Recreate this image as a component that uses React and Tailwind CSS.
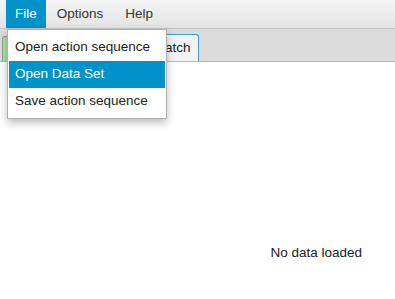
export default function App() {
  return (
    <div className="relative w-[395px] h-[299px] bg-white overflow-hidden text-[#333333]" style={{ fontFamily: '"Liberation Sans", Arial, sans-serif' }}>
      {/* menu bar */}
      <div className="flex h-[29px] items-stretch bg-gradient-to-b from-[#f4f4f4] to-[#e4e4e4] border-b border-[#c4c4c4] text-[13.5px] pl-[6px]">
        <div className="flex items-center px-[9px] bg-[#0093c9] text-white">File</div>
        <div className="flex items-center px-[11px]">Options</div>
        <div className="flex items-center px-[11px]">Help</div>
      </div>

      {/* tab header */}
      <div className="flex items-end h-[33px] bg-[#dcdcdc] border-b border-[#b8b8b8] pl-[2px]">
        <div className="h-[25px] w-[132px] bg-[#a8e3a0] border border-[#9c9c9c] border-b-0 rounded-t-[3px]"></div>
        <div className="flex items-center h-[27px] ml-[1px] pl-[20px] pr-[7px] bg-[#f3f3f3] border border-[#39a0d6] border-b-0 rounded-t-[3px] text-[13.5px] text-[#222]">
          Batch
        </div>
      </div>

      {/* content */}
      <div className="flex justify-end pt-[181px] pr-[33px] text-[13.5px] text-[#222]">
        No data loaded
      </div>

      {/* dropdown menu */}
      <div className="absolute left-[7px] top-[29px] w-[160px] bg-white border border-[#b0b0b0] pt-[4px] pb-[3px] shadow-[0_4px_8px_rgba(0,0,0,0.25)] text-[13.5px] text-[#222]">
        <div className="h-[27px] flex items-center pl-[7px]">Open action sequence</div>
        <div className="h-[27px] flex items-center pl-[6px] mx-[1px] bg-[#0093c9] text-white">Open Data Set</div>
        <div className="h-[27px] flex items-center pl-[7px]">Save action sequence</div>
      </div>
    </div>
  )
}
